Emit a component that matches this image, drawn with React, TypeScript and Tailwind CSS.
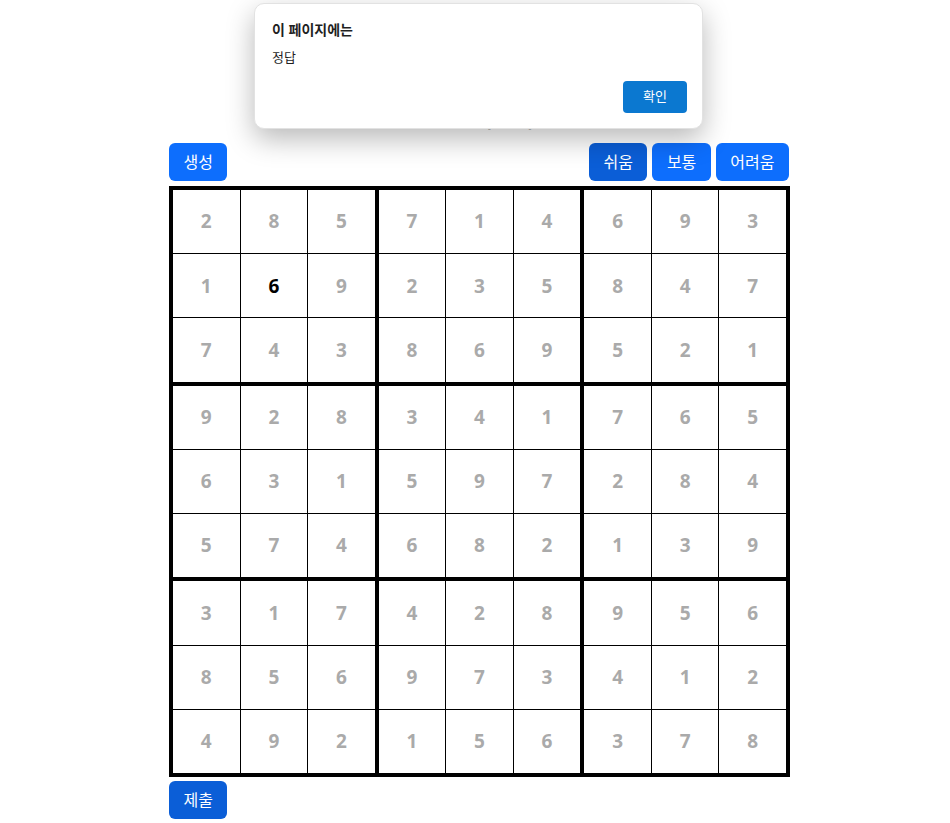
import React from "react";

const board: number[][] = [
  [2, 8, 5, 7, 1, 4, 6, 9, 3],
  [1, 6, 9, 2, 3, 5, 8, 4, 7],
  [7, 4, 3, 8, 6, 9, 5, 2, 1],
  [9, 2, 8, 3, 4, 1, 7, 6, 5],
  [6, 3, 1, 5, 9, 7, 2, 8, 4],
  [5, 7, 4, 6, 8, 2, 1, 3, 9],
  [3, 1, 7, 4, 2, 8, 9, 5, 6],
  [8, 5, 6, 9, 7, 3, 4, 1, 2],
  [4, 9, 2, 1, 5, 6, 3, 7, 8],
];

const font = { fontFamily: '"Noto Sans", "Noto Sans CJK KR", sans-serif' };

function Btn({ children, dark }: { children: React.ReactNode; dark?: boolean }) {
  return (
    <button
      className={
        "h-[38px] px-[14.5px] rounded-[6px] text-white text-[16px] leading-none " +
        (dark ? "bg-[#0b5ed7]" : "bg-[#0d6efd]")
      }
    >
      {children}
    </button>
  );
}

export default function App() {
  const boxes = [0, 1, 2, 3, 4, 5, 6, 7, 8];
  return (
    <div className="relative w-[950px] h-[823px] bg-white overflow-hidden" style={font}>
      <div className="ml-[169px] w-[621px] pt-[103px]">
        <h1 className="h-[32px] text-center text-[20px] font-bold leading-[32px] mb-[8px]">
          스도쿠 (쉬움)
        </h1>
        <div className="flex justify-between items-center h-[38px] mb-[5px]">
          <Btn>생성</Btn>
          <div className="flex gap-[5px] pr-px">
            <Btn dark>쉬움</Btn>
            <Btn>보통</Btn>
            <Btn>어려움</Btn>
          </div>
        </div>
        <div className="w-[621px] h-[591px] border-4 border-black bg-black grid grid-cols-3 grid-rows-3 gap-[4px]">
          {boxes.map((b) => {
            const br = Math.floor(b / 3) * 3;
            const bc = (b % 3) * 3;
            return (
              <div key={b} className="grid grid-cols-3 grid-rows-3 gap-px bg-black">
                {[0, 1, 2].flatMap((r) =>
                  [0, 1, 2].map((c) => {
                    const row = br + r;
                    const col = bc + c;
                    const v = board[row][col];
                    const black = row === 1 && col === 1;
                    return (
                      <div
                        key={r * 3 + c}
                        className={
                          "bg-white flex items-center justify-center text-[19px] font-bold " +
                          (black ? "text-black" : "text-[#aaaaaa]")
                        }
                      >
                        {v}
                      </div>
                    );
                  })
                )}
              </div>
            );
          })}
        </div>
        <div className="mt-[4px]">
          <Btn dark>제출</Btn>
        </div>
      </div>

      <div className="absolute left-[254px] top-[3px] w-[449px] h-[126px] bg-white rounded-[10px] border border-[#e2e2e2] shadow-[0_10px_28px_rgba(0,0,0,0.28)]">
        <div className="pl-[17px] pt-[16px] text-[14px] font-bold text-[#1f1f1f] leading-[20px]">
          이 페이지에는
        </div>
        <div className="pl-[17px] pt-[8px] text-[13px] text-[#1f1f1f] leading-[18px]">정답</div>
        <div className="absolute right-[15px] bottom-[15px] w-[64px] h-[32px] rounded-[4px] bg-[#0b78d0] text-white text-[13px] flex items-center justify-center">
          확인
        </div>
      </div>
    </div>
  );
}
